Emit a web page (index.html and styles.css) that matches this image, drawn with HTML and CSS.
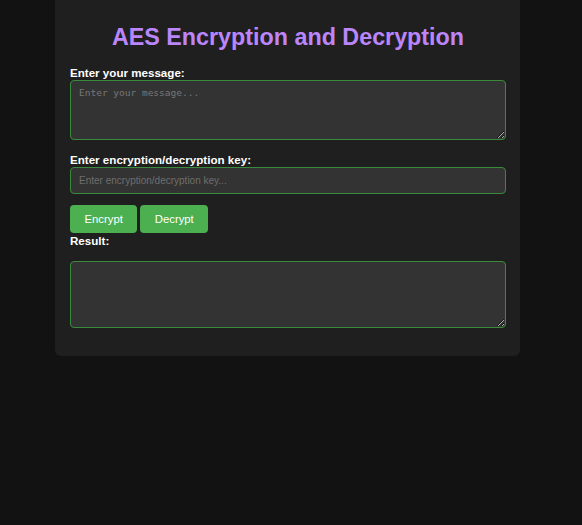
FILE: index.html
```html
<!DOCTYPE html>
<html lang="en">
<head>
<meta charset="UTF-8">
<title>AES Encryption and Decryption</title>
<link rel="stylesheet" href="styles.css">
</head>
<body>
  <div class="container">
    <h1 class="title">AES Encryption and Decryption</h1>
    <label class="label" for="message">Enter your message:</label>
    <textarea id="message" class="field area" placeholder="Enter your message..."></textarea>
    <label class="label" for="key">Enter encryption/decryption key:</label>
    <input id="key" class="field input" type="text" placeholder="Enter encryption/decryption key...">
    <div class="buttons">
      <button class="btn">Encrypt</button>
      <button class="btn">Decrypt</button>
    </div>
    <label class="label" for="result">Result:</label>
    <textarea id="result" class="field area result" readonly></textarea>
  </div>
</body>
</html>
```

FILE: styles.css
```css
html, body {
  margin: 0;
  padding: 0;
}
body {
  background: #121212;
  color: #ffffff;
  font-family: "Liberation Sans", Arial, sans-serif;
  height: 525px;
}
.container {
  box-sizing: border-box;
  width: 465px;
  margin: 0 0 0 55px;
  background: #1f1f1f;
  border-radius: 0 0 6px 6px;
  padding: 23px 14px 28px 15px;
  display: flex;
  flex-direction: column;
}
.title {
  margin: 0 0 14px;
  font-size: 23.3px;
  font-weight: bold;
  color: #bb86fc;
  text-align: center;
  line-height: 28px;
}
.label {
  display: block;
  font-size: 11.6px;
  font-weight: bold;
  line-height: 15px;
}
.field {
  box-sizing: border-box;
  width: 100%;
  background: #333333;
  border: 1px solid #3a8a3d;
  border-radius: 4px;
  color: #ffffff;
  margin: 0;
}
.area {
  height: 60px;
  padding: 6px 8px;
  font-family: "DejaVu Sans Mono", monospace;
  font-size: 9.5px;
  resize: vertical;
  margin-bottom: 12px;
}
.area::placeholder {
  color: #777777;
}
.input {
  height: 27px;
  padding: 0 8px;
  font-family: "Liberation Sans", Arial, sans-serif;
  font-size: 10px;
  margin-bottom: 11px;
}
.input::placeholder {
  color: #6e6e6e;
}
.buttons {
  display: flex;
  gap: 3px;
}
.btn {
  height: 28px;
  padding: 0 14.5px;
  background: #4caf50;
  color: #ffffff;
  border: none;
  border-radius: 4px;
  font-family: "Liberation Sans", Arial, sans-serif;
  font-size: 11.3px;
}
.result {
  height: 67px;
  margin-top: 13px;
  margin-bottom: 0;
}
```
